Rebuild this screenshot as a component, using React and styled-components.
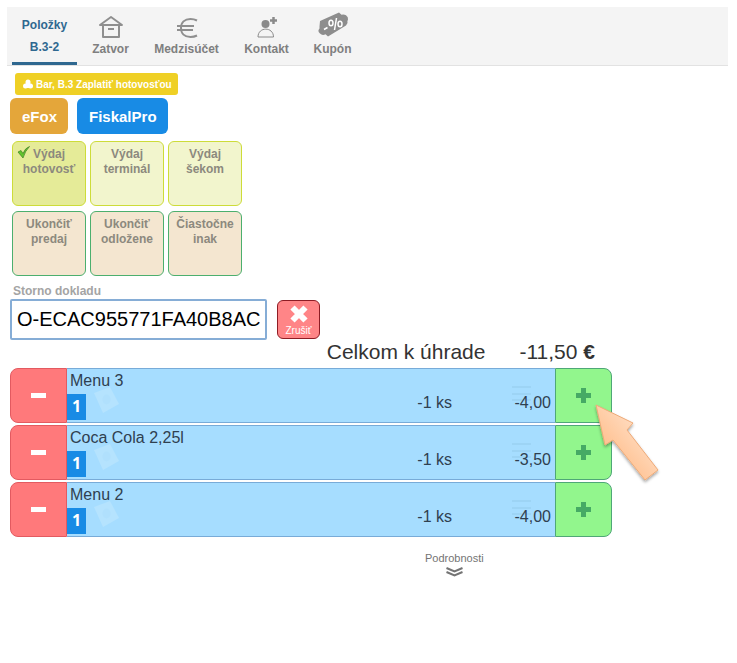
import React from "react";
import styled, { createGlobalStyle } from "styled-components";

const Global = createGlobalStyle`
  * { box-sizing: border-box; }
  body { margin: 0; background: #fff; font-family: "Liberation Sans", Arial, sans-serif; color: #333; }
  button, input { font-family: inherit; margin: 0; }
  button { cursor: pointer; }
`;

const Page = styled.main`
  padding: 7px 9px 0 7px;
`;

const Toolbar = styled.nav`
  display: flex;
  align-items: flex-start;
  min-height: 59px;
  padding-left: 5px;
  background: #f4f4f4;
  border-bottom: 1px solid #e2e2e2;
`;

const Tab = styled.button`
  width: ${(p) => p.$width}px;
  height: 58px;
  padding: ${(p) => (p.$active ? "7px 0 0" : "4px 0 0")};
  display: flex;
  flex-direction: column;
  align-items: center;
  border: 0;
  border-bottom: 3px solid ${(p) => (p.$active ? "#2f6890" : "transparent")};
  background: none;
  color: ${(p) => (p.$active ? "#2f6890" : "#7f7f7f")};
  font-size: 12px;
  font-weight: 700;
  line-height: ${(p) => (p.$active ? 22 : 20)}px;
  white-space: nowrap;

  svg { display: block; }
`;

const Notice = styled.div`
  display: flex;
  align-items: center;
  gap: 3px;
  width: fit-content;
  height: 22px;
  margin: 7px 0 3px 8px;
  padding: 0 6px 0 8px;
  border-radius: 3px;
  background: #efd025;
  color: #fff;
  font-size: 10px;
  font-weight: 700;
  white-space: nowrap;
`;

const Devices = styled.div`
  display: flex;
  gap: 9px;
  padding-left: 3px;
`;

const DeviceButton = styled.button`
  height: 36px;
  padding: 0 11px 0 12px;
  border: 0;
  border-radius: 6px;
  background: ${(p) => p.$color};
  color: #fff;
  font-size: 15px;
  font-weight: 700;
`;

const Payments = styled.div`
  display: grid;
  grid-template-columns: repeat(3, 74px);
  gap: 5px 4px;
  margin: 7px 0 0 5px;
`;

const tones = {
  selected: { fill: "#e5eb98", line: "#cddc39" },
  expense: { fill: "#f2f5cd", line: "#cddc39" },
  finish: { fill: "#f4e6d0", line: "#4caf6e" },
};

const PaymentButton = styled.button`
  position: relative;
  height: 65px;
  padding: 5px 0 0;
  display: flex;
  flex-direction: column;
  align-items: center;
  border: 1px solid ${(p) => tones[p.$tone].line};
  border-radius: 6px;
  background: ${(p) => tones[p.$tone].fill};
  color: #8c897e;
  font-size: 12px;
  font-weight: 700;
  line-height: 15px;
`;

const CheckMark = styled.svg`
  position: absolute;
  top: 3px;
  left: 4px;
`;

const Label = styled.label`
  display: block;
  margin: 8px 0 0 6px;
  color: #a4a4a4;
  font-size: 12px;
  font-weight: 700;
  line-height: 15px;
`;

const DocumentRow = styled.div`
  display: flex;
  gap: 10px;
  padding-left: 3px;
`;

const DocumentInput = styled.input`
  width: 257px;
  height: 41px;
  padding: 0 5px;
  border: 2px solid #86add6;
  border-radius: 2px;
  background: #fff;
  color: #000;
  font-size: 20px;
  outline: 0;
`;

const CancelButton = styled.button`
  width: 43px;
  height: 39px;
  margin-top: 1px;
  padding: 3px 0 0;
  display: flex;
  flex-direction: column;
  align-items: center;
  border: 1px solid #8e1c24;
  border-radius: 6px;
  background: #ff8587;
  color: #fff;
  font-size: 10px;
  line-height: 14px;
`;

const Receipt = styled.section`
  width: 100%;
  max-width: 605px;
  padding: 0 0 0 3px;
`;

const Total = styled.div`
  display: flex;
  justify-content: flex-end;
  gap: 34px;
  height: 28px;
  padding-right: 17px;
  font-size: 21px;
  line-height: 24px;
`;

const Items = styled.ul`
  display: flex;
  flex-direction: column;
  gap: 2px;
  margin: 0;
  padding: 0;
  list-style: none;
`;

const Item = styled.li`
  display: grid;
  grid-template-columns: 57px 1fr 57px;
  height: 55px;
`;

const StepButton = styled.button`
  display: flex;
  align-items: center;
  justify-content: center;
  padding: 0;
  border: 1px solid ${(p) => (p.$plus ? "#4fa777" : "#e35a60")};
  border-radius: ${(p) => (p.$plus ? "0 8px 8px 0" : "8px 0 0 8px")};
  background: ${(p) => (p.$plus ? "#92f68d" : "#ff797b")};
`;

const ItemBody = styled.div`
  display: grid;
  grid-template-columns: 1fr 100px 103px;
  grid-template-rows: 24px 29px;
  border: solid #78abd8;
  border-width: 1px 0;
  background: #a6ddff;
  color: #2f4050;
  font-size: 16px;
`;

const ItemName = styled.div`
  grid-column: 1 / -1;
  padding-left: 3px;
  line-height: 23px;
`;

const Markers = styled.div`
  display: flex;
  align-items: flex-start;
  gap: 7px;
`;

const Badge = styled.span`
  width: 19px;
  height: 26px;
  margin-top: 1px;
  background: #188be5;
  color: #fff;
  font-family: "Open Sans", sans-serif;
  font-size: 16px;
  font-weight: 700;
  line-height: 24px;
  text-align: center;
`;

const CardIcon = styled.svg`
  margin-top: -7px;
`;

const Quantity = styled.span`
  text-align: right;
  line-height: 20px;
`;

const Price = styled.span`
  position: relative;
  padding-right: 4px;
  text-align: right;
  line-height: 20px;
`;

const Lines = styled.svg`
  position: absolute;
  top: -8px;
  right: 24px;
`;

const PriceText = styled.span`
  position: relative;
`;

const Details = styled.button`
  display: flex;
  flex-direction: column;
  align-items: center;
  gap: 2px;
  margin: 15px 0 0 415px;
  padding: 0;
  border: 0;
  background: none;
  color: #747474;
  font-size: 11px;
  line-height: 13px;
`;

const Pointer = styled.svg`
  position: absolute;
  top: 400px;
  left: 590px;
  pointer-events: none;
`;

const HouseIcon = () => (
  <svg width="26" height="28" viewBox="0 0 26 28" fill="none" stroke="#8f8f8f" strokeWidth="2">
    <path d="M2 14 13 6 24 14ZM5 14V26H21V14M10 18H16" strokeLinejoin="round" />
  </svg>
);

const EuroIcon = () => (
  <svg width="24" height="28" viewBox="0 0 24 28" fill="none" stroke="#8f8f8f" strokeWidth="2">
    <path d="M22 9.500C20 8.500 18 8 15.500 8C9.500 8 6 11.500 6 17S9.500 26 15.500 26C18 26 20 25.500 22 24.500M2 15H19M2 19H18" />
  </svg>
);

const ContactIcon = () => (
  <svg width="22" height="28" viewBox="0 0 22 28">
    <path d="M2 26C2 15.500 17.500 15.500 17.500 26Z" fill="none" stroke="#8a8a8a" />
    <circle cx="9.500" cy="13" r="4" fill="#8a8a8a" />
    <path d="M14 9.500H21M17.500 6V13" stroke="#8a8a8a" strokeWidth="2.500" />
  </svg>
);

const CouponIcon = () => (
  <svg width="32" height="28" viewBox="0 0 32 28">
    <path
      d="M3 10 22 1.500 24.500 3.700Q27 3 29 4.300 31.500 6 31 8.500 30 10 30.500 12L29 14.500 11 25.500 8.500 23.300Q6 24.500 4 23.300 1 21.500 1.500 19 3 17.500 2.500 15.500Z"
      fill="#8d8d8d"
    />
    <g fill="none" stroke="#fff" strokeWidth="1.500">
      <path d="M7 18.500 10.500 16.500M17.500 19 19.500 7" />
      <ellipse cx="14" cy="12" rx="2" ry="2.800" />
      <ellipse cx="23" cy="13" rx="2" ry="2.800" />
    </g>
  </svg>
);

const tabs = [
  { label: "Zatvor", width: 67, Icon: HouseIcon },
  { label: "Medzisúčet", width: 85, Icon: EuroIcon },
  { label: "Kontakt", width: 75, Icon: ContactIcon },
  { label: "Kupón", width: 57, Icon: CouponIcon },
];

const payments = [
  { lines: ["Výdaj", "hotovosť"], tone: "selected" },
  { lines: ["Výdaj", "terminál"], tone: "expense" },
  { lines: ["Výdaj", "šekom"], tone: "expense" },
  { lines: ["Ukončiť", "predaj"], tone: "finish" },
  { lines: ["Ukončiť", "odložene"], tone: "finish" },
  { lines: ["Čiastočne", "inak"], tone: "finish" },
];

const items = [
  { name: "Menu 3", price: "-4,00" },
  { name: "Coca Cola 2,25l", price: "-3,50" },
  { name: "Menu 2", price: "-4,00" },
];

export default function App() {
  return (
    <Page>
      <Global />
      <Toolbar>
        <Tab $active $width={65}>
          <span>Položky</span>
          <span>B.3-2</span>
        </Tab>
        {tabs.map(({ label, width, Icon }) => (
          <Tab key={label} $width={width}>
            <Icon />
            <span>{label}</span>
          </Tab>
        ))}
      </Toolbar>

      <Notice>
        <svg width="10" height="10" viewBox="0 0 10 10" fill="#fff">
          <circle cx="5" cy="3" r="2.500" />
          <circle cx="2.500" cy="7" r="2.500" />
          <circle cx="7.500" cy="7" r="2.500" />
          <path d="M3 3H7L8 9H2Z" />
        </svg>
        Bar, B.3 Zaplatiť hotovosťou
      </Notice>

      <Devices>
        <DeviceButton $color="#e4a63a">eFox</DeviceButton>
        <DeviceButton $color="#188be5">FiskalPro</DeviceButton>
      </Devices>

      <Payments>
        {payments.map(({ lines, tone }) => (
          <PaymentButton key={lines.join(" ")} $tone={tone} aria-pressed={tone === "selected"}>
            {tone === "selected" && (
              <CheckMark width="14" height="14" viewBox="0 0 14 14">
                <path d="M1 7 4 5.500 6 8.500Q8 3 12.500 1.500 8 6 6 13Z" fill="#62c62c" stroke="#3d7d25" strokeWidth="0.700" />
              </CheckMark>
            )}
            {lines.map((line) => (
              <span key={line}>{line}</span>
            ))}
          </PaymentButton>
        ))}
      </Payments>

      <Label htmlFor="document">Storno dokladu</Label>
      <DocumentRow>
        <DocumentInput id="document" defaultValue="O-ECAC955771FA40B8AC" />
        <CancelButton>
          <svg width="20" height="20" viewBox="0 0 20 20" stroke="#fff" strokeWidth="6">
            <path d="M3.500 3.500 16.500 16.500M16.500 3.500 3.500 16.500" />
          </svg>
          Zrušiť
        </CancelButton>
      </DocumentRow>

      <Receipt>
        <Total>
          <span>Celkom k úhrade</span>
          <span>
            -11,50 <b>€</b>
          </span>
        </Total>
        <Items>
          {items.map(({ name, price }) => (
            <Item key={name}>
              <StepButton aria-label={`Odobrať ${name}`}>
                <svg width="15" height="15" viewBox="0 0 15 15" fill="#fff">
                  <rect y="5" width="15" height="5" />
                </svg>
              </StepButton>
              <ItemBody>
                <ItemName>{name}</ItemName>
                <Markers>
                  <Badge>1</Badge>
                  <CardIcon width="28" height="28" viewBox="0 0 28 28">
                    <path d="M1 7 17 1 26 18 10 27Z" fill="#b5e3fe" />
                    <ellipse cx="13.500" cy="13.500" rx="4" ry="5" fill="#b0e0fd" />
                  </CardIcon>
                </Markers>
                <Quantity>-1 ks</Quantity>
                <Price>
                  <Lines width="20" height="18" viewBox="0 0 20 18" stroke="#9dd4f5" strokeWidth="2">
                    <path d="M1 2H20M1 9H20M1 15H20" />
                  </Lines>
                  <PriceText>{price}</PriceText>
                </Price>
              </ItemBody>
              <StepButton $plus aria-label={`Pridať ${name}`}>
                <svg width="15" height="15" viewBox="0 0 15 15" fill="#46aa65">
                  <path d="M5 0H10V5H15V10H10V15H5V10H0V5H5Z" />
                </svg>
              </StepButton>
            </Item>
          ))}
        </Items>
        <Details>
          Podrobnosti
          <svg width="17" height="10" viewBox="0 0 17 10" fill="none" stroke="#747474" strokeWidth="2">
            <path d="M.5 1 8.500 4.500 16.500 1M.5 5 8.500 8.500 16.500 5" />
          </svg>
        </Details>
      </Receipt>

      <Pointer width="76" height="90" viewBox="0 0 76 90">
        <defs>
          <linearGradient id="pointerFill" x1="0" y1="1" x2="1" y2="0">
            <stop offset="0.200" stopColor="#ffbb86" />
            <stop offset="0.800" stopColor="#ffe1ca" />
          </linearGradient>
          <filter id="pointerShadow" x="-20%" y="-20%" width="140%" height="140%">
            <feDropShadow dx="0" dy="2" stdDeviation="1.500" floodOpacity="0.350" />
          </filter>
        </defs>
        <path
          d="M6 5 43 23 37 30 68 70 55 80 23 40 15 45Z"
          fill="url(#pointerFill)"
          stroke="#eeaa78"
          filter="url(#pointerShadow)"
        />
      </Pointer>
    </Page>
  );
}
